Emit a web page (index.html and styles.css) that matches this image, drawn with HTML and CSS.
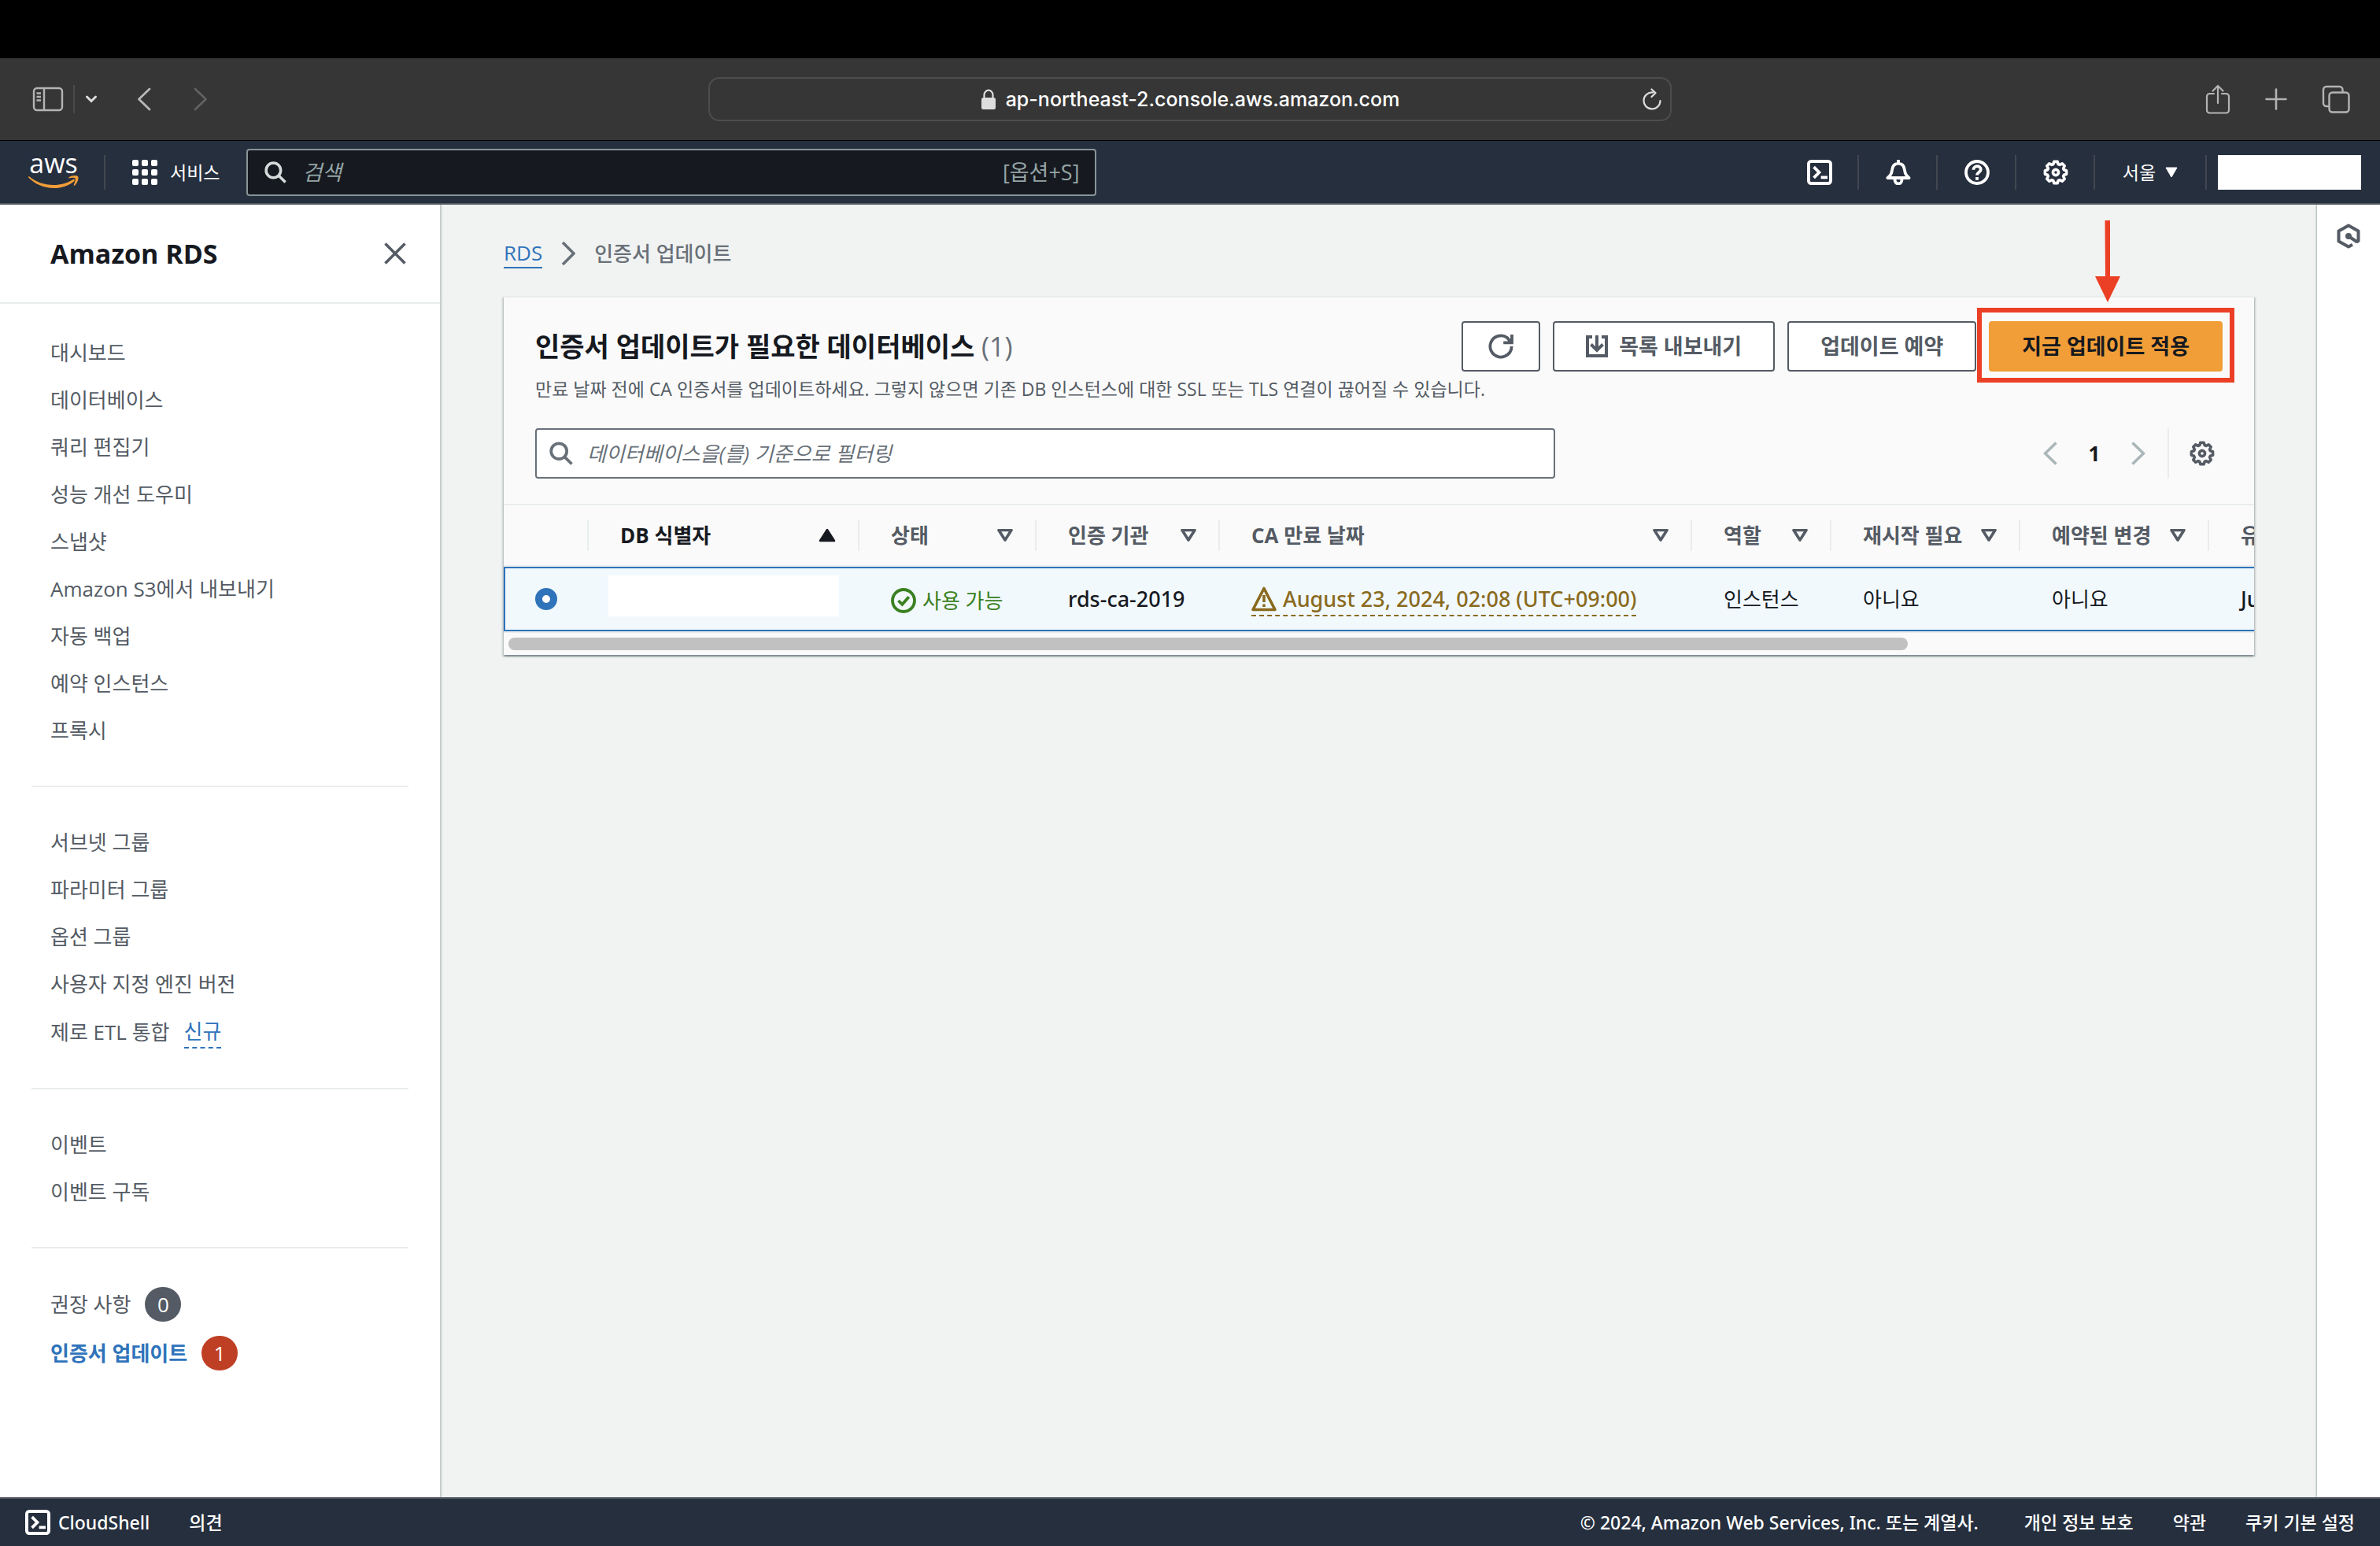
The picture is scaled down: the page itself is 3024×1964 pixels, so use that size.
FILE: index.html
```html
<!DOCTYPE html>
<html lang="ko">
<head>
  <meta charset="UTF-8">
  <meta name="viewport" content="width=device-width, initial-scale=1.0">
  <title>인증서 업데이트 - Amazon RDS</title>
  <link rel="stylesheet" href="styles.css">
</head>
<body>
  <svg class="symbols" aria-hidden="true">
    <symbol id="gear" viewBox="0 0 16 16">
      <path d="M14.8 6.9V9.1L13.2 9.6 12.8 10.5 13.6 12.1 12.1 13.6 10.5 12.8 9.6 13.2 9.1 14.8H6.9L6.4 13.2 5.5 12.8 3.9 13.6 2.4 12.1 3.2 10.5 2.8 9.6 1.2 9.1V6.9L2.8 6.4 3.2 5.5 2.4 3.9 3.9 2.4 5.5 3.2 6.4 2.8 6.9 1.2H9.1L9.6 2.8 10.5 3.2 12.1 2.4 13.6 3.9 12.8 5.5 13.2 6.4Z" fill="none" stroke="currentColor" stroke-width="1.8" stroke-linejoin="round"/>
      <circle cx="8" cy="8" r="1.8" fill="none" stroke="currentColor" stroke-width="1.8"/>
    </symbol>
    <symbol id="search" viewBox="0 0 16 16">
      <circle cx="6.5" cy="6.5" r="5.3" fill="none" stroke="currentColor" stroke-width="2"/>
      <path d="M10.3 10.3L15.2 15.2" stroke="currentColor" stroke-width="2"/>
    </symbol>
    <symbol id="sort" viewBox="0 0 20 16">
      <path d="M2 1.5H18L10 14Z" fill="none" stroke="currentColor" stroke-width="3.6" stroke-linejoin="round"/>
    </symbol>
    <symbol id="shell" viewBox="0 0 16 16">
      <rect x="1" y="1" width="14" height="14" rx="1.6" fill="none" stroke="currentColor" stroke-width="2"/>
      <path d="M4.3 4.6L7.7 8 4.3 11.4M8.8 11.2H13" fill="none" stroke="currentColor" stroke-width="1.9"/>
    </symbol>
  </svg>

  <div class="notch"></div>

  <!-- browser toolbar -->
  <div class="browser">
    <div class="browser-left">
      <button class="bare" aria-label="사이드바">
        <svg width="40" height="32" viewBox="0 0 40 32" fill="none" stroke="#b4b4b4" stroke-width="2.4"><rect x="2" y="2" width="36" height="28" rx="4"/><path d="M15 2V30M5.500 8.500H11M5.500 13H11M5.500 17.500H11"/></svg>
      </button>
      <span class="browser-line"></span>
      <button class="bare tabs-menu" aria-label="탭 그룹">
        <svg width="16" height="12" viewBox="0 0 16 12" fill="none" stroke="#dedede" stroke-width="3" stroke-linecap="round"><path d="M2.500 3L8 8.500 13.500 3"/></svg>
      </button>
      <button class="bare back" aria-label="뒤로">
        <svg width="18" height="30" viewBox="0 0 18 30" fill="none" stroke="#b8b8b8" stroke-width="2.800" stroke-linecap="round" stroke-linejoin="round"><path d="M16 2L2.500 15 16 28"/></svg>
      </button>
      <button class="bare forward" aria-label="앞으로" disabled>
        <svg width="18" height="30" viewBox="0 0 18 30" fill="none" stroke="#606060" stroke-width="2.800" stroke-linecap="round" stroke-linejoin="round"><path d="M2 2L15.500 15 2 28"/></svg>
      </button>
    </div>
    <div class="address">
      <span class="address-text">
        <svg width="20" height="26" viewBox="0 0 20 26"><rect x="1" y="11" width="18" height="15" rx="2.500" fill="#dedede"/><path d="M4.500 12V7.500a5.500 5.800 0 0 1 11 0V12" fill="none" stroke="#dedede" stroke-width="2.200"/></svg>
        ap-northeast-2.console.aws.amazon.com
      </span>
      <button class="bare" aria-label="새로 고침">
        <svg width="26" height="28" viewBox="0 0 26 28" fill="none" stroke="#dedede" stroke-width="2.200" stroke-linecap="round" stroke-linejoin="round"><path d="M14 5.500A10.500 10.500 0 1 0 23.500 16M12.500 1.500L17.500 6 12.500 11"/></svg>
      </button>
    </div>
    <div class="browser-right">
      <button class="bare" aria-label="공유">
        <svg width="32" height="38" viewBox="0 0 32 38" fill="none" stroke="#b4b4b4" stroke-width="2.200" stroke-linecap="round" stroke-linejoin="round"><path d="M11 12H5.500A3.500 3.500 0 0 0 2 15.500V33a3.500 3.500 0 0 0 3.500 3.500H26.500A3.500 3.500 0 0 0 30 33V15.500A3.500 3.500 0 0 0 26.500 12H21M16 24V2M9.500 8.500L16 2 22.500 8.500"/></svg>
      </button>
      <button class="bare" aria-label="새 탭">
        <svg width="28" height="28" viewBox="0 0 28 28" stroke="#b4b4b4" stroke-width="2.600" stroke-linecap="round"><path d="M14 1.500V26.500M1.500 14H26.500"/></svg>
      </button>
      <button class="bare" aria-label="탭 개요">
        <svg width="36" height="36" viewBox="0 0 36 36" fill="none" stroke="#b4b4b4" stroke-width="2.400"><rect x="9.500" y="9.500" width="25" height="25" rx="4"/><path d="M9.500 27H6A4 4 0 0 1 2 23V6A4 4 0 0 1 6 2H22.500A4 4 0 0 1 26.500 6V9.500"/></svg>
      </button>
    </div>
  </div>

  <!-- AWS navigation -->
  <header class="topnav">
    <a class="logo" href="#" aria-label="AWS">
      <svg width="64" height="48" viewBox="0 -6 64 48">
        <text class="logo-text" x="32" y="22" text-anchor="middle">aws</text>
        <path d="M1 26C9 33 20 37 32 37 41 37 50 34.500 57 30 58.500 29.200 59.600 31 58.200 32.200 51.500 37.800 42 41 32.500 41 20 41 9 36 .6 28 -.2 27 .2 25.500 1 26Z" fill="#f19e38"/>
        <path d="M51.500 27.200C55 24.600 61 24.400 63 26 64.500 28 62.500 34.500 59 37.600 58 38.300 57.400 37.800 57.800 36.900 59 34 60.500 30 59.500 28.600 58.500 27.400 55 27.700 52 28.300 51 28.400 50.700 27.800 51.500 27.200Z" fill="#f19e38"/>
      </svg>
    </a>
    <span class="nav-line"></span>
    <button class="bare services">
      <svg width="32" height="32" viewBox="0 0 32 32" fill="#fff"><rect width="8" height="8" rx="2"/><rect x="12" width="8" height="8" rx="2"/><rect x="24" width="8" height="8" rx="2"/><rect y="12" width="8" height="8" rx="2"/><rect x="12" y="12" width="8" height="8" rx="2"/><rect x="24" y="12" width="8" height="8" rx="2"/><rect y="24" width="8" height="8" rx="2"/><rect x="12" y="24" width="8" height="8" rx="2"/><rect x="24" y="24" width="8" height="8" rx="2"/></svg>
      서비스
    </button>
    <label class="nav-search">
      <svg width="28" height="28"><use href="#search"/></svg>
      <input type="text" placeholder="검색" aria-label="검색">
      <span>[옵션+S]</span>
    </label>
    <div class="nav-tools">
      <button class="bare tool" aria-label="CloudShell"><svg width="32" height="32"><use href="#shell"/></svg></button>
      <button class="bare tool" aria-label="알림">
        <svg width="32" height="32" viewBox="0 0 16 16" fill="none" stroke="#fff" stroke-width="1.900" stroke-linejoin="round"><path d="M1.200 11.500H14.800C12.500 9.500 12.300 8.500 12 6.500 11.700 4 10.500 2.300 8 2.300S4.300 4 4 6.500C3.700 8.500 3.500 9.500 1.200 11.500ZM8 2.300V0M5.800 12V13A2.200 2.200 0 0 0 10.200 13V12"/></svg>
      </button>
      <button class="bare tool" aria-label="도움말">
        <svg width="32" height="32" viewBox="0 0 16 16" fill="none" stroke="#fff" stroke-width="1.900"><circle cx="8" cy="8" r="7"/><path d="M5.700 6.400C5.700 3.400 10.400 3.400 10.400 6.100 10.400 7.800 8 7.900 8 9.800M8 11V12.900"/></svg>
      </button>
      <button class="bare tool" aria-label="설정"><svg width="32" height="32"><use href="#gear"/></svg></button>
      <button class="bare tool region">서울 <svg width="16" height="14" viewBox="0 0 16 14"><path d="M1 1H15L8 13Z" fill="#fff" stroke="#fff" stroke-linejoin="round"/></svg></button>
      <button class="bare account" aria-label="계정"></button>
    </div>
  </header>

  <div class="layout">
    <nav class="sidebar">
      <div class="sidebar-head">
        <h2>Amazon RDS</h2>
        <button class="bare" aria-label="닫기">
          <svg width="28" height="28" viewBox="0 0 28 28" stroke="#545b64" stroke-width="3.600"><path d="M1.500 1.500L26.500 26.500M26.500 1.500L1.500 26.500"/></svg>
        </button>
      </div>
      <ul class="menu">
        <li><a href="#">대시보드</a></li>
        <li><a href="#">데이터베이스</a></li>
        <li><a href="#">쿼리 편집기</a></li>
        <li><a href="#">성능 개선 도우미</a></li>
        <li><a href="#">스냅샷</a></li>
        <li><a href="#">Amazon S3에서 내보내기</a></li>
        <li><a href="#">자동 백업</a></li>
        <li><a href="#">예약 인스턴스</a></li>
        <li><a href="#">프록시</a></li>
      </ul>
      <ul class="menu">
        <li><a href="#">서브넷 그룹</a></li>
        <li><a href="#">파라미터 그룹</a></li>
        <li><a href="#">옵션 그룹</a></li>
        <li><a href="#">사용자 지정 엔진 버전</a></li>
        <li class="tagged"><a href="#">제로 ETL 통합</a><button class="bare new">신규</button></li>
      </ul>
      <ul class="menu">
        <li><a href="#">이벤트</a></li>
        <li><a href="#">이벤트 구독</a></li>
      </ul>
      <ul class="menu">
        <li class="tagged"><a href="#">권장 사항</a><span class="count">0</span></li>
        <li class="tagged"><a class="active" href="#">인증서 업데이트</a><span class="count count-alert">1</span></li>
      </ul>
    </nav>

    <main class="content">
      <nav class="breadcrumb">
        <a href="#">RDS</a>
        <svg width="18" height="32" viewBox="0 0 18 32" fill="none" stroke="#687078" stroke-width="3.600"><path d="M2 2L16 16 2 30"/></svg>
        <span>인증서 업데이트</span>
      </nav>

      <section class="panel">
        <div class="panel-head">
          <div class="title-row">
            <h1>인증서 업데이트가 필요한 데이터베이스 <span>(1)</span></h1>
            <div class="actions">
              <button class="btn btn-icon" aria-label="새로 고침">
                <svg width="32" height="32" viewBox="0 0 16 16" fill="none" stroke="#545b64" stroke-width="1.900"><path d="M14.800 8A6.800 6.800 0 1 1 12 2.500L14.600 5.600M15 .5V5.700H9.600"/></svg>
              </button>
              <button class="btn">
                <svg width="28" height="28" viewBox="0 0 28 28" fill="none" stroke="#545b64" stroke-width="4"><path d="M8 2H2V26H26V2H20M14 0V18M6.500 11.500L14 19 21.500 11.500"/></svg>
                목록 내보내기
              </button>
              <button class="btn">업데이트 예약</button>
              <div class="callout">
                <button class="btn btn-primary">지금 업데이트 적용</button>
                <svg class="arrow" width="32" height="104" viewBox="0 0 32 104" fill="#eb4025"><path d="M12.500 0H19V71H32L16 104 0 71H13Z"/></svg>
              </div>
            </div>
          </div>
          <p>만료 날짜 전에 CA 인증서를 업데이트하세요. 그렇지 않으면 기존 DB 인스턴스에 대한 SSL 또는 TLS 연결이 끊어질 수 있습니다.</p>
          <div class="filter-row">
            <label class="filter">
              <svg width="30" height="30"><use href="#search"/></svg>
              <input type="text" placeholder="데이터베이스을(를) 기준으로 필터링" aria-label="필터">
            </label>
            <div class="pager">
              <button class="bare" aria-label="이전" disabled><svg width="18" height="30" viewBox="0 0 18 30" fill="none" stroke="#aab7b8" stroke-width="3.600"><path d="M16.500 1.500L2.500 15 16.500 28.500"/></svg></button>
              <button class="bare page">1</button>
              <button class="bare" aria-label="다음" disabled><svg width="18" height="30" viewBox="0 0 18 30" fill="none" stroke="#aab7b8" stroke-width="3.600"><path d="M1.500 1.500L15.500 15 1.500 28.500"/></svg></button>
              <button class="bare prefs" aria-label="기본 설정"><svg width="32" height="32"><use href="#gear"/></svg></button>
            </div>
          </div>
        </div>

        <div class="table-wrap">
          <table>
            <colgroup>
              <col class="col-radio"><col class="col-id"><col class="col-status"><col class="col-ca"><col class="col-date"><col class="col-role"><col class="col-flag"><col class="col-flag"><col class="col-window">
            </colgroup>
            <thead>
              <tr>
                <th></th>
                <th class="sorted"><div>DB 식별자 <svg width="22" height="18" viewBox="0 0 22 18"><path d="M2 16H20L11 2Z" fill="#16191f" stroke="#16191f" stroke-width="2.500" stroke-linejoin="round"/></svg></div></th>
                <th><div>상태 <svg width="20" height="16"><use href="#sort"/></svg></div></th>
                <th><div>인증 기관 <svg width="20" height="16"><use href="#sort"/></svg></div></th>
                <th><div>CA 만료 날짜 <svg width="20" height="16"><use href="#sort"/></svg></div></th>
                <th><div>역할 <svg width="20" height="16"><use href="#sort"/></svg></div></th>
                <th><div>재시작 필요 <svg width="20" height="16"><use href="#sort"/></svg></div></th>
                <th><div>예약된 변경 <svg width="20" height="16"><use href="#sort"/></svg></div></th>
                <th><div>유지 관리</div></th>
              </tr>
            </thead>
            <tbody>
              <tr>
                <td><input type="radio" name="db" aria-label="데이터베이스 선택" checked></td>
                <td class="cell-id"><div class="masked"></div></td>
                <td>
                  <span class="status">
                    <svg width="32" height="32" viewBox="0 0 16 16" fill="none" stroke="currentColor" stroke-width="1.900"><circle cx="8" cy="8" r="7"/><path d="M4.700 8L7.200 10.400 11.400 5.600"/></svg>
                    사용 가능
                  </span>
                </td>
                <td class="latin">rds-ca-2019</td>
                <td class="latin">
                  <button class="bare expiry">
                    <svg width="32" height="32" viewBox="0 0 32 32" fill="none" stroke="currentColor" stroke-width="3.600" stroke-linejoin="round"><path d="M16 2.500L30 29.500H2ZM16 11V20M16 22.500V26"/></svg>
                    August 23, 2024, 02:08 (UTC+09:00)
                  </button>
                </td>
                <td>인스턴스</td>
                <td>아니요</td>
                <td>아니요</td>
                <td class="latin">June</td>
              </tr>
            </tbody>
          </table>
        </div>
        <div class="scrollbar"><div class="thumb"></div></div>
      </section>
    </main>

    <aside class="help-rail">
      <button class="bare" aria-label="도구">
        <svg width="30" height="32" viewBox="0 0 30 32" fill="none" stroke="#545b64" stroke-width="4" stroke-linejoin="round"><path d="M25 23.500L27.500 22V9.500L15 2.500 2.500 9.500V22.500L15 29.500 20 26.700M15 16L26 23.500"/><circle cx="15" cy="16" r="3" fill="#545b64" stroke-width="2"/></svg>
      </button>
    </aside>
  </div>

  <footer class="footer">
    <a class="cloudshell" href="#"><svg width="32" height="32"><use href="#shell"/></svg>CloudShell</a>
    <a href="#">의견</a>
    <span class="copyright">© 2024, Amazon Web Services, Inc. 또는 계열사.</span>
    <a href="#">개인 정보 보호</a>
    <a href="#">약관</a>
    <a href="#">쿠키 기본 설정</a>
  </footer>
</body>
</html>
```
FILE: styles.css
```css
* {
  box-sizing: border-box;
}

body {
  margin: 0;
  min-height: 100vh;
  display: flex;
  flex-direction: column;
  font-family: "Open Sans", "Noto Sans CJK KR", sans-serif;
  font-size: 26px;
  line-height: 40px;
  color: #16191f;
  background: #f1f3f2;
}

svg {
  display: block;
  flex: none;
}

a {
  color: inherit;
  text-decoration: none;
}

input {
  font: inherit;
  color: inherit;
}

.symbols {
  position: absolute;
  width: 0;
  height: 0;
}

.bare {
  padding: 0;
  border: 0;
  background: none;
  font: inherit;
  color: inherit;
}

/* browser */
.notch {
  height: 74px;
  background: #000;
}

.browser {
  display: grid;
  grid-template-columns: 1fr 1224px 1fr;
  align-items: center;
  height: 105px;
  background: #363636;
  border-bottom: 1px solid #000;
}

.browser-left,
.browser-right {
  display: flex;
  align-items: center;
}

.browser-left {
  padding-left: 41px;
}

.browser-line {
  width: 2px;
  height: 36px;
  margin: 0 13px 0 12px;
  background: #4a4a4a;
}

.back {
  margin-left: 50px;
}

.forward {
  margin-left: 54px;
}

.address {
  display: flex;
  align-items: center;
  height: 56px;
  padding: 0 10px;
  border: 2px solid #4d4d4d;
  border-radius: 14px;
  font-family: Inter, sans-serif;
  font-size: 25px;
  font-weight: 500;
  color: #fff;
}

.address-text {
  flex: 1;
  display: flex;
  align-items: center;
  justify-content: center;
  gap: 12px;
  margin-left: 26px;
}

.browser-right {
  justify-content: flex-end;
  gap: 44px;
  padding-right: 38px;
}

/* top navigation */
.topnav {
  display: flex;
  align-items: center;
  height: 81px;
  padding: 0 24px 0 36px;
  background: #262f3e;
  border-bottom: 2px solid #545b64;
  color: #fff;
  font-size: 23px;
}

.logo {
  padding-bottom: 6px;
}

.logo svg {
  overflow: visible;
}

.logo-text {
  font-family: "Open Sans", sans-serif;
  font-size: 34px;
  font-weight: 500;
  fill: #fff;
}

.nav-line {
  width: 2px;
  height: 44px;
  margin: 0 34px 0 32px;
  background: #414750;
}

.services {
  display: flex;
  align-items: center;
  gap: 16px;
}

.nav-search {
  flex: 0 1 1080px;
  display: flex;
  align-items: center;
  gap: 20px;
  height: 60px;
  margin-left: 34px;
  padding: 0 20px 0 21px;
  border: 2px solid #879596;
  border-radius: 4px;
  background: #16191f;
  color: #95a5a6;
  font-size: 27px;
}

.nav-search svg {
  color: #d5dbdb;
}

.nav-search input,
.filter input {
  flex: 1;
  min-width: 0;
  padding: 0;
  border: 0;
  outline: 0;
  background: none;
}

.nav-search input::placeholder,
.filter input::placeholder {
  color: inherit;
  opacity: 1;
  font-style: italic;
}

.nav-tools {
  display: flex;
  align-items: center;
  margin-left: auto;
}

.tool {
  display: flex;
  align-items: center;
  justify-content: center;
  width: 100px;
  height: 44px;
  padding-left: 2px;
  border-right: 2px solid #414750;
}

.region {
  gap: 12px;
  width: 142px;
  padding: 0;
}

.account {
  width: 182px;
  height: 44px;
  margin-left: 14px;
  background: #fff;
}

/* page */
.layout {
  flex: 1;
  display: flex;
}

.sidebar {
  flex: none;
  width: 560px;
  background: #fff;
  border-right: 1px solid #c5cacb;
  box-shadow: 1px 0 2px rgba(0, 28, 36, 0.2);
  color: #545b64;
}

.sidebar-head {
  display: flex;
  align-items: center;
  justify-content: space-between;
  height: 126px;
  padding: 0 43px 0 64px;
  border-bottom: 2px solid #eaeded;
  margin-bottom: 32px;
}

h2 {
  margin: 0;
  font-size: 34px;
  color: #16191f;
}

.menu {
  list-style: none;
  margin: 0 40px;
  padding: 0 24px;
}

.menu + .menu {
  margin-top: 40px;
  padding-top: 40px;
  border-top: 2px solid #eaeded;
}

.menu li {
  display: flex;
  align-items: center;
  gap: 18px;
  height: 60px;
}

.menu .tagged {
  height: 62px;
}

.menu .new {
  color: #2f73bb;
  border-bottom: 2px dashed #2f73bb;
}

.count {
  min-width: 46px;
  height: 44px;
  border-radius: 22px;
  background: #545b64;
  color: #fff;
  font-size: 26px;
  line-height: 44px;
  text-align: center;
}

.count-alert {
  background: #bf3f25;
}

.menu .active {
  color: #2f73bb;
  font-weight: 700;
}

.content {
  flex: 1;
  min-width: 0;
  padding: 42px 80px;
}

.breadcrumb {
  display: flex;
  align-items: center;
  gap: 24px;
  height: 40px;
  margin-bottom: 34px;
  color: #687078;
}

.breadcrumb a {
  line-height: 36px;
  color: #2f73bb;
  border-bottom: 2px solid #2f73bb;
}

.breadcrumb span {
  font-weight: 500;
}

.panel {
  border-top: 2px solid #eaeded;
  background: #fafafa;
  box-shadow: 0 2px 2px rgba(0, 28, 36, 0.3), 2px 2px 2px rgba(0, 28, 36, 0.15), -2px 2px 2px rgba(0, 28, 36, 0.15);
}

.panel-head {
  padding: 30px 40px 32px;
}

.title-row {
  display: flex;
  align-items: center;
  justify-content: space-between;
}

h1 {
  margin: 0;
  font-size: 34px;
}

h1 span {
  font-weight: 400;
  color: #687078;
}

.actions {
  display: flex;
  gap: 16px;
}

.btn {
  display: flex;
  align-items: center;
  gap: 14px;
  height: 64px;
  padding: 0 40px;
  border: 2px solid #545b64;
  border-radius: 4px;
  background: #fff;
  color: #545b64;
  font: inherit;
  font-size: 27px;
  font-weight: 700;
}

.btn-icon {
  padding: 0 32px;
}

.btn-primary {
  border-color: #f19e38;
  background: #f19e38;
  color: #16191f;
}

/* highlight drawn round the apply button */
.callout {
  position: relative;
}

.callout::after {
  content: "";
  position: absolute;
  inset: -17px -15px -14px;
  border: 6px solid #eb4025;
  pointer-events: none;
}

.arrow {
  position: absolute;
  right: 130px;
  bottom: 88px;
}

.panel-head p {
  margin: 2px 0 30px;
  font-size: 23px;
  color: #545b64;
}

.filter-row {
  display: flex;
  align-items: center;
  justify-content: space-between;
}

.filter {
  flex: 0 1 1296px;
  display: flex;
  align-items: center;
  gap: 18px;
  height: 64px;
  padding: 0 16px;
  border: 2px solid #687078;
  border-radius: 4px;
  background: #fff;
  color: #687078;
}

.pager {
  display: flex;
  align-items: center;
  padding-right: 10px;
}

.page {
  width: 94px;
  font-weight: 700;
}

.prefs {
  display: flex;
  align-items: center;
  height: 64px;
  margin-left: 28px;
  padding-left: 26px;
  border-left: 2px solid #eaeded;
  color: #545b64;
}

/* databases */
.table-wrap {
  overflow: hidden;
}

table {
  width: 2768px;
  table-layout: fixed;
  border-collapse: separate;
  border-spacing: 0;
}

.col-radio { width: 106px; }
.col-id { width: 344px; }
.col-status { width: 225px; }
.col-ca { width: 233px; }
.col-date { width: 600px; }
.col-role { width: 177px; }
.col-flag { width: 240px; }

th,
td {
  height: 80px;
  padding: 0;
  text-align: left;
  white-space: nowrap;
}

th {
  border-top: 2px solid #eaeded;
  border-bottom: 2px solid #eaeded;
  color: #545b64;
}

th div {
  display: flex;
  align-items: center;
  justify-content: space-between;
  height: 40px;
  padding: 0 28px 0 40px;
  border-left: 2px solid #eaeded;
}

.sorted {
  color: #16191f;
}

td {
  height: 82px;
  padding-left: 42px;
  border-top: 2px solid #2f73bb;
  border-bottom: 2px solid #2f73bb;
  background: #f1f9fd;
}

td:first-child {
  padding-left: 38px;
  border-left: 2px solid #2f73bb;
}

.latin {
  font-family: "Noto Sans", sans-serif;
  font-size: 27px;
  font-weight: 500;
}

input[type="radio"] {
  appearance: none;
  display: block;
  width: 28px;
  height: 28px;
  margin: 0;
  border: 9px solid #2f73bb;
  border-radius: 50%;
  background: #fff;
}

.cell-id {
  padding: 0 24px 0 27px;
}

.masked {
  height: 52px;
  margin-top: -8px;
  background: #fff;
}

.status,
.expiry {
  display: inline-flex;
  align-items: center;
  gap: 8px;
  vertical-align: middle;
}

.status {
  color: #3a8020;
}

.expiry {
  border-bottom: 2px dashed #8a6a1d;
  color: #8a6a1d;
}

.scrollbar {
  padding: 6px;
  border-top: 2px solid #eaeded;
}

.thumb {
  width: 80.4%;
  height: 16px;
  border-radius: 8px;
  background: #c1c1c1;
}

.help-rail {
  flex: none;
  display: flex;
  justify-content: center;
  align-items: flex-start;
  width: 80px;
  padding-top: 24px;
  background: #fff;
  box-shadow: -1px 0 2px rgba(0, 28, 36, 0.3);
}

.footer {
  display: flex;
  align-items: center;
  gap: 50px;
  height: 62px;
  padding: 0 32px;
  background: #262f3e;
  border-top: 2px solid #545b64;
  color: #fff;
  font-family: "Noto Sans", "Noto Sans CJK KR", sans-serif;
  font-size: 23px;
  font-weight: 500;
}

.cloudshell {
  display: flex;
  align-items: center;
  gap: 10px;
}

.copyright {
  margin-left: auto;
  margin-right: 8px;
}
```
